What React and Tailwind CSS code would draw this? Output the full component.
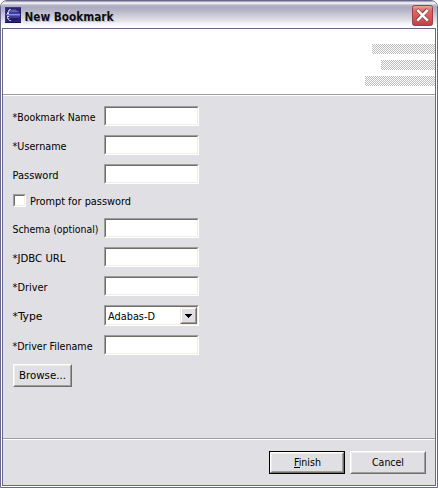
import React from 'react';

const sunken =
  'border border-t-[#9d9d9f] border-l-[#9d9d9f] border-r-white border-b-white';
const sunkenInner =
  'h-full w-full border border-t-[#716f64] border-l-[#716f64] border-r-[#f1efe2] border-b-[#f1efe2] bg-white';

function Label({ children, width }) {
  return (
    <svg className="block h-[16px] w-[92px] overflow-visible" aria-label={children}>
      <text x="0.5" y="12" textLength={width} lengthAdjust="spacingAndGlyphs" fill="#000" fontSize="11">
        {children}
      </text>
    </svg>
  );
}

function Field({ label, width }) {
  return (
    <div className="flex h-5 items-center">
      <div className="w-[92px] pt-[2px]">
        <Label width={width}>{label}</Label>
      </div>
      <div className={`h-5 w-[95px] ${sunken}`}>
        <div className={sunkenInner} />
      </div>
    </div>
  );
}

function Button({ children, className }) {
  return (
    <div className={`h-[23px] border border-t-white border-l-white border-r-[#716f64] border-b-[#716f64] ${className}`}>
      <div className="flex h-full w-full justify-center border border-t-[#f1efe2] border-l-[#f1efe2] border-r-[#9d9d9f] border-b-[#9d9d9f] bg-[#e0dfe3]">
        {children}
      </div>
    </div>
  );
}

function AppIcon() {
  return (
    <svg width="16" height="16" viewBox="0 0 16 16" shapeRendering="crispEdges">
      <rect width="16" height="16" fill="#2a2275" />
      <path d="M0 0h16v1H1v15H0z" fill="#3c3a8c" />
      <rect y="15" width="16" height="1" fill="#19114f" />
      <circle cx="9" cy="8" r="6" fill="#443c93" />
      <path d="M6 3h5v1h2v1H4V4h2z" fill="#655fae" />
      <path d="M4 2h2v1H5v1H4v2H3v1H2V5h1V3h1z" fill="#a9b0e6" />
      <path d="M2 9h1v2h1v2h2v1H4v-1H3v-1H2z" fill="#a9b0e6" />
      <path d="M2 6h2v1H2zM2 9h2v1H2z" fill="#dfe6ff" />
      <path d="M1 7h14v1H1z" fill="#7d95ea" />
      <path d="M2 8h13v1H2z" fill="#5560c4" />
      <path d="M5 11h9v1h-1v1h-2v1H7v-1H5z" fill="#241a68" />
    </svg>
  );
}

function CloseButton() {
  return (
    <svg width="21" height="21" viewBox="0 0 21 21">
      <defs>
        <linearGradient id="red" x1="0" y1="0" x2="0" y2="1">
          <stop offset="0" stopColor="#e8aaa2" />
          <stop offset=".25" stopColor="#d96a66" />
          <stop offset=".65" stopColor="#d55455" />
          <stop offset="1" stopColor="#b84248" />
        </linearGradient>
      </defs>
      <rect x=".5" y=".5" width="20" height="20" rx="2" fill="url(#red)" stroke="#984149" />
      <path d="M5 4.5l10.5 11M15.5 4.5L5 15.5" stroke="#7d3038" strokeWidth="3.6" />
      <path d="M5.3 4.8l10.4 10.9M15.7 4.8L5.3 15.7" stroke="#fff" strokeWidth="2.5" />
    </svg>
  );
}

const stipple = 'h-[10px] bg-[conic-gradient(#fff_25%,#bdbdbd_0_50%,#fff_0_75%,#bdbdbd_0)] bg-[length:2px_2px]';

export default function App() {
  return (
    <div className="h-[488px] w-[438px] bg-white font-['DejaVu_Sans_Condensed','DejaVu_Sans',sans-serif] [font-stretch:condensed]">
      <div className="flex h-full w-full flex-col overflow-hidden rounded-t-[7px] border border-[#69678a] bg-white">
        <div className="flex h-[27px] shrink-0 items-start bg-[linear-gradient(#8f8da8_0px,#ffffff_2px,#b9b8cb_4px,#aaa9bf_6px,#b7b6c9_10px,#cfced9_15px,#e3e3e9_20px,#f6f6f8_23px,#ffffff_26px)] pl-1 pr-1">
          <div className="mt-[6px]"><AppIcon /></div>
          <svg className="ml-[3px] mt-[4px] h-5 w-[100px] overflow-visible">
            <text x="1.5" y="17" textLength="89" lengthAdjust="spacingAndGlyphs" fontSize="13" fontWeight="700" fill="#b9b9c3">New Bookmark</text>
            <text x="0.5" y="16" textLength="89" lengthAdjust="spacingAndGlyphs" fontSize="13" fontWeight="700" fill="#0e1010">New Bookmark</text>
          </svg>
          <div className="ml-auto mt-1"><CloseButton /></div>
        </div>
        <div className="mx-px mb-px flex flex-1 flex-col border border-[#69678a] bg-[#e0dfe3]">
          <div className="flex h-[67px] shrink-0 flex-col items-end gap-[6px] border-b border-white bg-white pt-[15px] shadow-[inset_0_-1px_0_#9d9d9f]">
            <div className={`w-[63px] ${stipple}`} />
            <div className={`w-[54px] ${stipple}`} />
            <div className={`w-[70px] ${stipple}`} />
          </div>
          <div className="flex flex-1 flex-col gap-[9px] pl-[9px] pt-[10px]">
            <Field label="*Bookmark Name" width={83} />
            <Field label="*Username" width={54} />
            <Field label="Password" width={46} />
            <div className="flex h-4 items-start">
              <div className={`ml-px mt-px h-[13px] w-[13px] ${sunken}`}>
                <div className={sunkenInner} />
              </div>
              <svg className="ml-[4px] h-4 w-[110px] overflow-visible">
                <text x="0" y="12" textLength="101" lengthAdjust="spacingAndGlyphs" fontSize="11">Prompt for password</text>
              </svg>
            </div>
            <Field label="Schema (optional)" width={86} />
            <Field label="*JDBC URL" width={53} />
            <Field label="*Driver" width={35} />
            <div className="flex h-[21px] items-start">
              <div className="w-[92px] pt-[3px]">
                <Label width={30}>*Type</Label>
              </div>
              <div className={`h-[21px] w-[95px] ${sunken}`}>
                <div className={`flex justify-between ${sunkenInner}`}>
                  <svg className="ml-[2px] h-[17px] w-[60px] overflow-visible">
                    <text x="0" y="13" textLength="47" lengthAdjust="spacingAndGlyphs" fontSize="11">Adabas-D</text>
                  </svg>
                  <div className="h-[17px] w-[17px] border border-t-[#f1efe2] border-l-[#f1efe2] border-r-[#716f64] border-b-[#716f64]">
                    <div className="flex h-full w-full items-center justify-center border border-t-white border-l-white border-r-[#9d9d9f] border-b-[#9d9d9f] bg-[#e0dfe3]">
                      <svg width="7" height="4" shapeRendering="crispEdges"><path d="M0 0h7v1H6v1H5v1H4v1H3V3H2V2H1V1H0z" /></svg>
                    </div>
                  </div>
                </div>
              </div>
            </div>
            <Field label="*Driver Filename" width={80} />
            <Button className="ml-px w-[59px]">
              <svg className="h-[19px] w-[47px] overflow-visible">
                <text x="0" y="13" textLength="47" lengthAdjust="spacingAndGlyphs" fontSize="11">Browse...</text>
              </svg>
            </Button>
          </div>
          <div className="flex h-[47px] shrink-0 items-start justify-end gap-[5px] border-t border-[#9d9d9f] pr-[9px] pt-[12px] shadow-[inset_0_1px_0_#fff]">
            <div className="border border-black">
              <Button className="h-[21px]! w-[74px]">
                <svg className="h-[17px] w-[27px] overflow-visible">
                  <text x="0" y="12" textLength="27" lengthAdjust="spacingAndGlyphs" fontSize="11">Finish</text>
                  <rect x="0" y="13" width="6" height="1" />
                </svg>
              </Button>
            </div>
            <Button className="w-[76px]">
              <svg className="h-[19px] w-[32px] overflow-visible">
                <text x="0" y="13" textLength="32" lengthAdjust="spacingAndGlyphs" fontSize="11">Cancel</text>
              </svg>
            </Button>
          </div>
        </div>
      </div>
    </div>
  );
}
